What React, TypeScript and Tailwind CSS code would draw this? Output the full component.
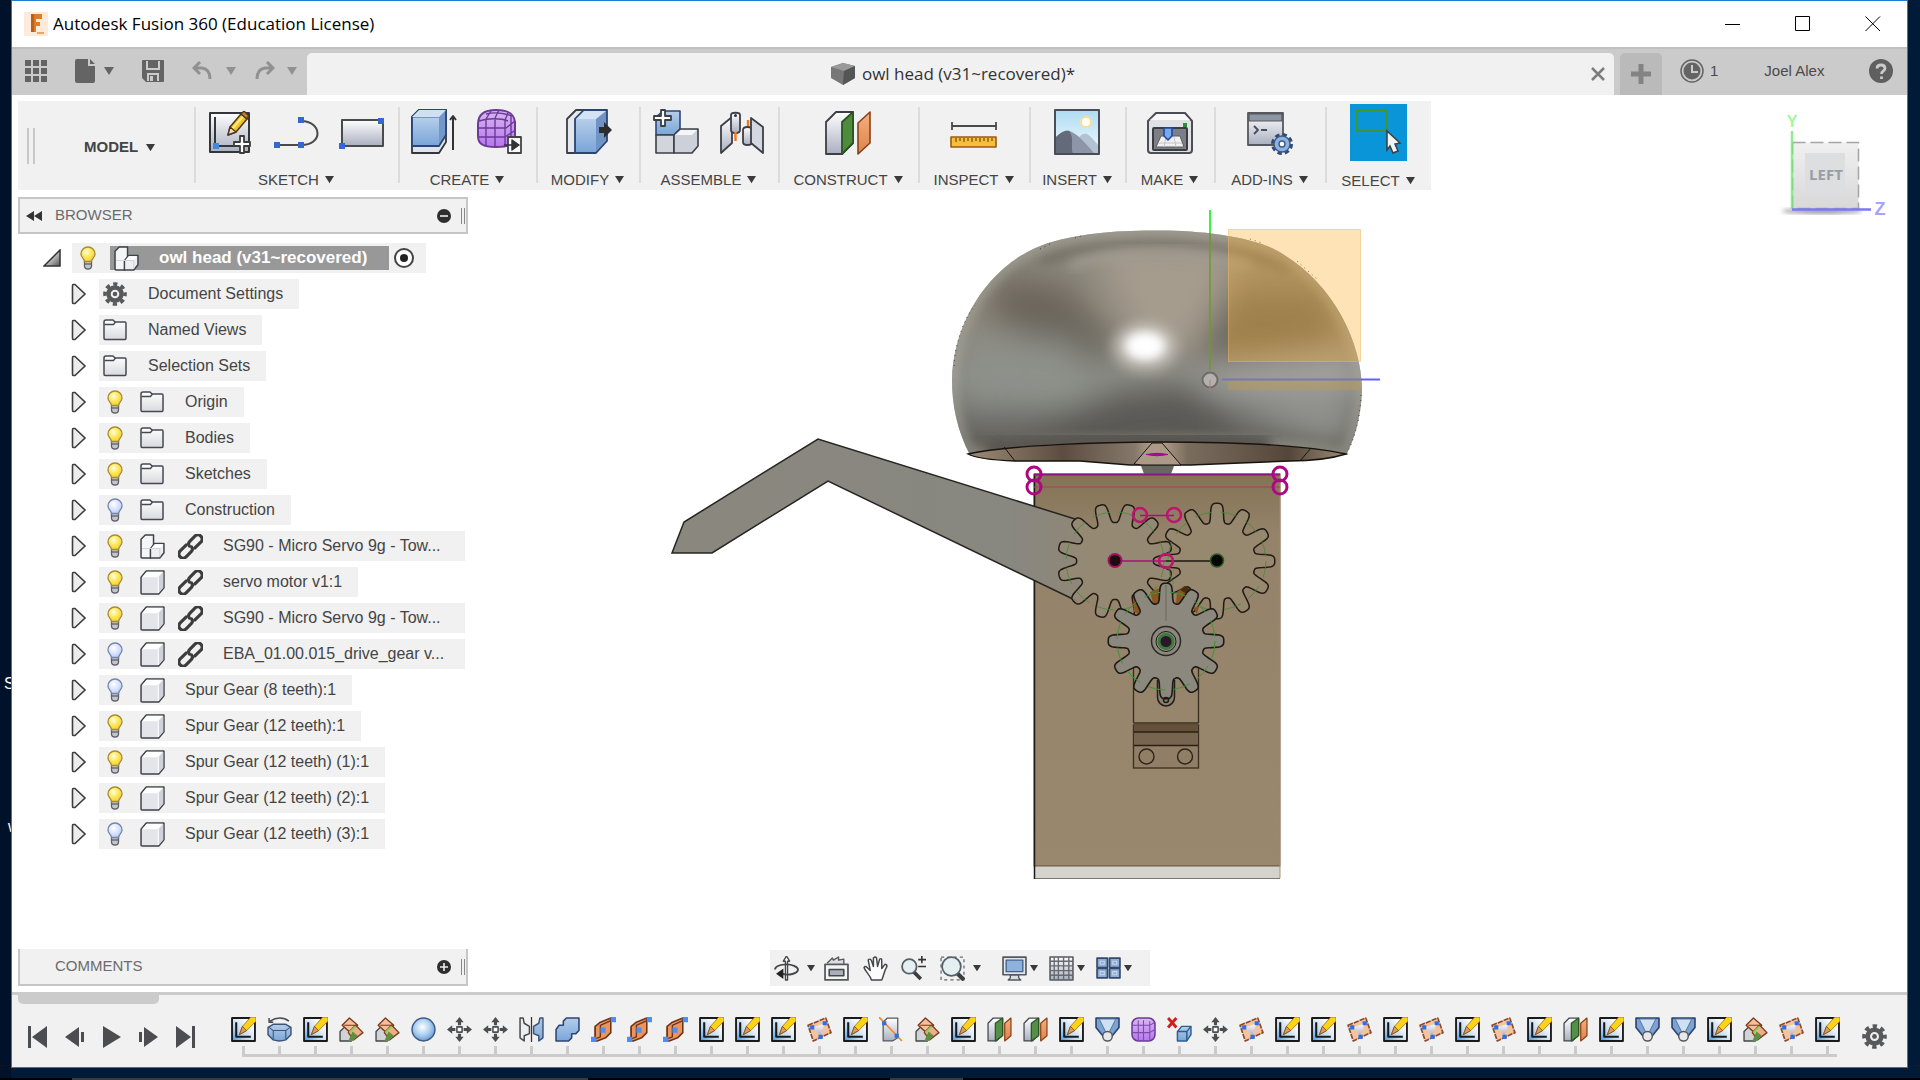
import type { ReactNode } from "react"

const GREY = "#4b4d50"

function gearPath(cx: number, cy: number, phase: number) {
    const points: string[] = []
    for (let i = 0; i < 480; i++) {
        const a = (i / 480) * Math.PI * 2
        const r = 48 + 10 * Math.tanh(2.1 * (Math.cos(12 * (a - phase)) + 0.05))
        points.push(`${(cx + r * Math.cos(a)).toFixed(1)} ${(cy + r * Math.sin(a)).toFixed(1)}`)
    }
    return `M${points.join("L")}Z`
}

/* Gradients shared by all icons */
function SharedDefs() {
    return (
        <svg className="absolute h-0 w-0" aria-hidden="true">
            <defs>
                <linearGradient id="g-steel" x1="0" y1="0" x2="0" y2="1">
                    <stop offset="0" stopColor="#ffffff" />
                    <stop offset="1" stopColor="#a9afc0" />
                </linearGradient>
                <linearGradient id="g-blue" x1="0" y1="0" x2="0" y2="1">
                    <stop offset="0" stopColor="#b5cdea" />
                    <stop offset="1" stopColor="#7ba6d8" />
                </linearGradient>
                <linearGradient id="g-folder" x1="0" y1="0" x2="0" y2="1">
                    <stop offset="0" stopColor="#ffffff" />
                    <stop offset="1" stopColor="#d9dade" />
                </linearGradient>
                <linearGradient id="g-sketch" x1="1" y1="0" x2="0" y2="1">
                    <stop offset="0.3" stopColor="#f4f7fa" />
                    <stop offset="0.65" stopColor="#bcd8f0" />
                    <stop offset="1" stopColor="#3f9cec" />
                </linearGradient>
                <linearGradient id="g-purple" x1="0" y1="0" x2="0" y2="1">
                    <stop offset="0" stopColor="#d9b8f2" />
                    <stop offset="1" stopColor="#b676ee" />
                </linearGradient>
                <linearGradient id="g-sky" x1="0" y1="0" x2="0" y2="1">
                    <stop offset="0" stopColor="#aedcf4" />
                    <stop offset="1" stopColor="#f3fafd" />
                </linearGradient>
                <linearGradient id="g-orange" x1="0" y1="0" x2="0" y2="1">
                    <stop offset="0" stopColor="#f5b080" />
                    <stop offset="1" stopColor="#dd8347" />
                </linearGradient>
                <linearGradient id="g-arrow" x1="0" y1="0" x2="1" y2="1">
                    <stop offset="0.3" stopColor="#eeeeee" />
                    <stop offset="1" stopColor="#555555" />
                </linearGradient>
                <radialGradient id="g-bulb-on" cx="0.4" cy="0.35" r="0.65">
                    <stop offset="0" stopColor="#fffde0" />
                    <stop offset="0.5" stopColor="#fbea62" />
                    <stop offset="1" stopColor="#f2d23c" />
                </radialGradient>
                <radialGradient id="g-bulb-off" cx="0.4" cy="0.35" r="0.65">
                    <stop offset="0" stopColor="#ffffff" />
                    <stop offset="1" stopColor="#bcd0fa" />
                </radialGradient>
                <radialGradient id="g-sphere" cx="0.45" cy="0.4" r="0.6">
                    <stop offset="0" stopColor="#ffffff" />
                    <stop offset="0.6" stopColor="#a9cdf0" />
                    <stop offset="1" stopColor="#6c9bd0" />
                </radialGradient>
            </defs>
        </svg>
    )
}

function Caret({ className = "w-[9px] text-[#3a3a3a]" }: { className?: string }) {
    return (
        <svg viewBox="0 0 10 8" className={`shrink-0 ${className}`} aria-hidden="true">
            <path d="M0 0H10L5 8Z" fill="currentColor" />
        </svg>
    )
}

function BigIcon({ children }: { children: ReactNode }) {
    return (
        <svg viewBox="0 0 48 48" className="h-12 w-12" fill="none" strokeLinejoin="round" aria-hidden="true">
            {children}
        </svg>
    )
}

const bigIcons: Record<string, ReactNode> = {
    sketch: (
        <BigIcon>
            <rect x="4" y="5" width="39" height="39" fill="url(#g-steel)" stroke="#33363b" strokeWidth="2" />
            <path d="M9 9V38H28" stroke="#33363b" strokeWidth="2" />
            <rect x="7" y="35" width="6" height="6" fill="#3f8ae0" />
            <path d="M22 27L24 19L35 6L41 11L30 24Z" fill="#f6c21c" stroke="#4a3a1a" strokeWidth="1.5" />
            <path d="M26 21L37 8.5" stroke="#fdea86" strokeWidth="2" />
            <path d="M35 6L37 4Q38 3 39 4L42 7Q43 8 42 9L41 11Z" fill="#c97a48" stroke="#4a3a1a" strokeWidth="1.5" />
            <path d="M22 27L24 19L30 24Z" fill="#f1dcc0" stroke="#4a3a1a" strokeWidth="1.4" />
            <path d="M34 28H38V34H44V38H38V45H34V38H28V34H34Z" fill="#fff" stroke="#3c3c3c" strokeWidth="1.8" />
        </BigIcon>
    ),
    line: (
        <BigIcon>
            <path d="M5 37H29C52 37 50 13 29 13" stroke="#4a4a4a" strokeWidth="2" />
            <path d="M2 34h6v6h-6zM26 34h6v6h-6zM26 9h6v6h-6z" fill="#3467cf" />
        </BigIcon>
    ),
    rectangle: (
        <BigIcon>
            <rect x="4" y="12" width="41" height="26" fill="url(#g-steel)" stroke="#4a4a4a" strokeWidth="2" />
            <path d="M1 35h6v6h-6zM40 10h6v6h-6z" fill="#3467cf" />
        </BigIcon>
    ),
    extrude: (
        <BigIcon>
            <path d="M2 9L9 2H36V34L29 45H2Z" fill="#dfe3ea" stroke="#33363b" strokeWidth="1.8" />
            <path d="M2 9L9 2H36V27L29 38H2Z" fill="#7298cb" stroke="#2c4674" strokeWidth="1.8" />
            <path d="M2 9L9 2H36L29 9Z" fill="#cfe0f3" />
            <rect x="3" y="10" width="26" height="27" fill="url(#g-blue)" />
            <path d="M43 42V9M40 12L43 8L46 12" stroke="#333" strokeWidth="2" />
        </BigIcon>
    ),
    form: (
        <BigIcon>
            <path d="M2 16C2 5 10 2 20 2C33 2 38 6 39 14V28C38 37 32 39 20 39C7 39 2 36 2 28Z" fill="url(#g-purple)" stroke="#6b3a97" strokeWidth="2" />
            <path d="M3 20H30L39 13M2 29H29L38 23M3 13C12 10 25 10 32 13M10 6C18 4 28 5 36 8M10 11V38M19 10V39M29 12V38M35 8V34M10 11L15 3M19 10L23 2M29 12L32 5" stroke="#6b3a97" strokeWidth="1.4" />
            <rect x="32" y="29" width="13" height="16" fill="#fafafa" stroke="#444" strokeWidth="1.8" />
            <path d="M28 37H36V32L43 37L36 42V37" fill="#333" stroke="#333" strokeWidth="1.5" />
        </BigIcon>
    ),
    pressPull: (
        <BigIcon>
            <path d="M3 11L12 2H21L12 11V45H3Z" fill="#e6e8ec" stroke="#3c3f45" strokeWidth="1.8" />
            <path d="M11 11L20 2H43V33L32 45H11Z" fill="#6e93c4" stroke="#2c4674" strokeWidth="1.8" />
            <path d="M12 11L20 3H42L32 11Z" fill="#d3e3f4" />
            <rect x="12" y="11" width="20" height="33" fill="url(#g-blue)" />
            <path d="M35 19H40V14L48 22L40 30V25H35Z" fill="#2d2d2d" />
        </BigIcon>
    ),
    component: (
        <BigIcon>
            <path d="M4 27V9L11 3H28V21L22 27Z" fill="url(#g-blue)" stroke="#2c4674" strokeWidth="1.6" />
            <path d="M4 27H22V45H4Z" fill="#d2d5dc" stroke="#3c3f45" strokeWidth="1.6" />
            <path d="M22 27L28 21H46V38L40 45H22Z" fill="#ccd0d8" stroke="#3c3f45" strokeWidth="1.6" />
            <path d="M23 27L29 22H45L40 27Z" fill="#f4f5f7" />
            <path d="M9 2H13V8H19V12H13V18H9V12H2V8H9Z" fill="#fff" stroke="#3c3f45" strokeWidth="1.8" />
        </BigIcon>
    ),
    joint: (
        <BigIcon>
            <path d="M3 18L14 9V35L3 45Z" fill="url(#g-steel)" stroke="#3c3f45" strokeWidth="1.8" />
            <path d="M13 7C13 4 22 4 22 7V22C22 26 13 26 13 22Z" fill="url(#g-steel)" stroke="#3c3f45" strokeWidth="1.8" />
            <circle cx="17.5" cy="7.500" r="1.5" fill="#333" />
            <path d="M17.500 24V33M30 12V22" stroke="#ef7a22" strokeWidth="2.4" />
            <path d="M25 22C25 18 34 18 34 22V34C34 38 25 38 25 34Z" fill="url(#g-steel)" stroke="#3c3f45" strokeWidth="1.8" />
            <path d="M33 10L45 19V45L33 35Z" fill="#d3d7df" stroke="#3c3f45" strokeWidth="1.8" />
        </BigIcon>
    ),
    construct: (
        <BigIcon>
            <path d="M2 14L12 4H29V35L18 46H2Z" fill="url(#g-steel)" stroke="#3c3f45" strokeWidth="1.8" />
            <path d="M18 14L29 4V35L18 46Z" fill="#4f8b3c" stroke="#2b5421" strokeWidth="1.8" />
            <path d="M34 15L46 4V35L34 46Z" fill="url(#g-orange)" stroke="#8a4118" strokeWidth="1.6" />
        </BigIcon>
    ),
    measure: (
        <BigIcon>
            <path d="M2 18H46M2 14V22M46 14V22" stroke="#4a4a4a" strokeWidth="1.8" />
            <rect x="1" y="29" width="45" height="10" fill="#f5bf3a" stroke="#9a5a18" strokeWidth="1.6" />
            <path d="M6 30v4M10 30v3M14 30v4M18 30v3M22 30v4M26 30v3M30 30v4M34 30v3M38 30v4M42 30v3" stroke="#8a5a18" strokeWidth="1.4" />
        </BigIcon>
    ),
    insert: (
        <BigIcon>
            <rect x="2" y="2" width="44" height="44" fill="url(#g-sky)" />
            <path d="M22 35C27 26 31 25 34 26C39 29 42 34 46 38V46H22Z" fill="#b3c2d2" />
            <path d="M2 30C8 24 13 22 17 23C28 28 36 40 42 46H2Z" fill="#8d96a8" />
            <path d="M2 30C8 24 12 22 16 23C22 30 17 38 20 46H2Z" fill="#636b7b" />
            <circle cx="33" cy="14" r="5" fill="#fff" stroke="#f9e08c" strokeWidth="2" />
            <rect x="2" y="2" width="44" height="44" stroke="#4a4d55" strokeWidth="2" />
        </BigIcon>
    ),
    make: (
        <BigIcon>
            <path d="M2 13L10 5H39L46 13V42Q46 45 43 45H5Q2 45 2 42Z" fill="#dfe1e4" stroke="#4b4e54" strokeWidth="2" />
            <path d="M4 12L11 6H38L44 12Z" fill="#f8f8f9" />
            <rect x="7" y="20" width="34" height="22" rx="1" fill="#7c8086" stroke="#3b3d42" strokeWidth="2" />
            <path d="M15 28H34L38 39H10Z" fill="#f1f1f1" stroke="#5a5c60" />
            <path d="M12 35H36M20 29L18 39M28 29L30 39" stroke="#c4c4c4" />
            <path d="M18 20H26V28L22 32L18 28Z" fill="#78a8e6" stroke="#1f49a5" strokeWidth="1.6" />
            <rect x="37" y="15" width="4" height="4" fill="#2a8e32" />
        </BigIcon>
    ),
    addins: (
        <BigIcon>
            <rect x="2" y="5" width="35" height="32" fill="url(#g-steel)" stroke="#55585e" strokeWidth="1.8" />
            <rect x="3" y="6" width="33" height="7" fill="#8e95a3" stroke="#55585e" strokeWidth="1.2" />
            <path d="M8 18L12 22L8 26M15 22H21" stroke="#4a4d55" strokeWidth="1.8" />
            <circle cx="36" cy="36" r="9" stroke="#2f4a75" strokeWidth="4" strokeDasharray="4.2 2.9" />
            <circle cx="36" cy="36" r="8" fill="#8fb3df" stroke="#3c5a8a" strokeWidth="1.4" />
            <circle cx="36" cy="36" r="3" fill="#fff" stroke="#3c5a8a" strokeWidth="1.4" />
        </BigIcon>
    ),
}

function SmallIcon({ children, className = "h-[25px] w-[25px]" }: { children: ReactNode; className?: string }) {
    return (
        <svg viewBox="0 0 24 24" className={`shrink-0 ${className}`} fill="none" strokeLinejoin="round" aria-hidden="true">
            {children}
        </svg>
    )
}

function Gear({ className }: { className?: string }) {
    return (
        <SmallIcon className={className}>
            <circle cx="12" cy="12" r="6.500" stroke="#58595b" strokeWidth="4.400" />
            <circle cx="12" cy="12" r="10" stroke="#58595b" strokeWidth="3.600" strokeDasharray="4.200 3.654" strokeDashoffset="2.100" />
            <circle cx="12" cy="12" r="2.300" fill="#58595b" />
        </SmallIcon>
    )
}

const treeIcons: Record<string, ReactNode> = {
    gear: <Gear className="h-6 w-6" />,
    folder: (
        <SmallIcon className="h-6 w-6">
            <path d="M1 4Q1 2 3 2H10L12 4H22Q23 4 23 5.500V20Q23 21.500 22 21.500H2Q1 21.500 1 20Z" fill="url(#g-folder)" stroke="#454851" strokeWidth="1.500" />
            <path d="M1.500 6.500H10.500L12.500 4" stroke="#454851" strokeWidth="1.300" />
        </SmallIcon>
    ),
    body: (
        <SmallIcon>
            <path d="M1 7L6 1H23V17L18 23H2Q1 23 1 22Z" fill="#e4e5ea" stroke="#3e4148" strokeWidth="1.400" />
            <path d="M2 7L6.500 1.700H22L17 7Z" fill="#fff" />
            <path d="M18 7L22.300 2V17L18 22Z" fill="#cfd2d9" />
            <path d="M17.500 7V22" stroke="#fff" />
        </SmallIcon>
    ),
    component: (
        <SmallIcon>
            <path d="M1 5L5 1H13V13L10 23H2Q1 23 1 22Z" fill="#f4f5f7" stroke="#3e4148" strokeWidth="1.400" />
            <path d="M10 14L14 9H23V18L19 23H10Z" fill="#eceef1" stroke="#3e4148" strokeWidth="1.400" />
            <path d="M11 13.500L14 10H22L19 13.500Z" fill="#fff" />
            <path d="M2 14H10M10 14H19V22" stroke="#d0d3d9" />
        </SmallIcon>
    ),
    link: (
        <SmallIcon>
            <g transform="rotate(-45 12 12)" stroke="#3c3c3c" strokeWidth="3" strokeLinecap="round">
                <path d="M10 8H2Q-2 8 -2 12Q-2 16 2 16H9Q12 16 12.500 13" />
                <path d="M14 16H22Q26 16 26 12Q26 8 22 8H15Q12 8 11.500 11" />
            </g>
        </SmallIcon>
    ),
}

function Bulb({ on }: { on: boolean }) {
    return (
        <svg viewBox="0 0 18 24" className="h-6 w-[18px] shrink-0" fill="none" aria-hidden="true">
            <path d="M5.500 15H12.500V20Q12.500 23 9 23Q5.500 23 5.500 20Z" fill="#c4c6cc" stroke="#5d606b" strokeWidth="1.300" />
            <path d="M5.500 18H12.500" stroke="#5d606b" strokeWidth="1.300" />
            <path d="M9 1A7 7 0 0 1 16 8C16 11.500 12.500 12.500 12.500 15.500H5.500C5.500 12.500 2 11.500 2 8A7 7 0 0 1 9 1Z" fill={on ? "url(#g-bulb-on)" : "url(#g-bulb-off)"} stroke={on ? "#a98a35" : "#7685ad"} strokeWidth="1.300" />
        </svg>
    )
}

const timelineIcons: Record<string, ReactNode> = {
    sketch: (
        <SmallIcon>
            <rect x="1" y="1" width="22" height="22" fill="url(#g-sketch)" stroke="#1a1a1a" strokeWidth="1.800" />
            <path d="M5 5V19H19" stroke="#1a1a1a" strokeWidth="2" />
            <path d="M8 17L11 9L19 0H24V4L15 13Z" fill="#fbd416" stroke="#a66a12" strokeWidth="0.800" />
            <path d="M8 17L11 9L15 13Z" fill="#e29a58" stroke="#7a4a1a" strokeWidth="0.800" />
        </SmallIcon>
    ),
    revolve: (
        <SmallIcon>
            <path d="M3 4C9 0 16 0 21 4M2 1V5H6" stroke="#4a4a4a" strokeWidth="1.400" />
            <path d="M1 10L6 7H18L23 10V17L18 22Q12 24 6 22L1 17Z" fill="url(#g-blue)" stroke="#3c5377" strokeWidth="1.400" />
            <path d="M2 10L6 13H18L22 10M6 13V21M18 13V21" stroke="#3c5377" />
        </SmallIcon>
    ),
    split: (
        <SmallIcon>
            <path d="M1 23V14L6 9L12 14V23Z" fill="#d1d3d6" stroke="#44464a" strokeWidth="1.300" />
            <path d="M10 1L18 8L11 15L3 8Z" fill="#f6bf9b" stroke="#7b3c1c" strokeWidth="1.300" />
            <path d="M16 8L23 15L14 22L9 15Z" fill="#eeae86" stroke="#7b3c1c" strokeWidth="1.300" />
            <path d="M13 14L9 23H13L18 18Z" fill="#5d8f42" />
            <path d="M5 8H16M9 15L17 7" stroke="#7b3c1c" strokeWidth="1" />
            <path d="M10 15L16 9" stroke="#8fd35c" strokeWidth="2" />
        </SmallIcon>
    ),
    sphere: (
        <SmallIcon>
            <circle cx="12" cy="12" r="11" fill="url(#g-sphere)" stroke="#3e5a85" strokeWidth="1.400" />
        </SmallIcon>
    ),
    move: (
        <SmallIcon>
            <rect x="9.500" y="9.500" width="5" height="5" fill="#fff" stroke={GREY} strokeWidth="1.500" />
            <path d="M12 0L16 5H13.500V8H10.500V5H8ZM12 24L8 19H10.500V16H13.500V19H16ZM0 12L5 8V10.500H8V13.500H5V16ZM24 12L19 16V13.500H16V10.500H19V8Z" fill={GREY} />
        </SmallIcon>
    ),
    mirror: (
        <SmallIcon>
            <path d="M1 1L4 1L5 6L10 9V16L5 18V23L1 20Z" fill="#eceef1" stroke="#44464a" strokeWidth="1.400" />
            <path d="M23 1L20 1L19 6L14 9V16L19 18V23L23 20Z" fill="url(#g-blue)" stroke="#3c5377" strokeWidth="1.400" />
            <path d="M12 0V24" stroke="#333" strokeWidth="1.200" />
        </SmallIcon>
    ),
    combine: (
        <SmallIcon>
            <path d="M1 12L4 8H8V4L11 1H23V13L20 16H16V20L13 23H1Z" fill="url(#g-blue)" stroke="#2c4674" strokeWidth="1.500" />
        </SmallIcon>
    ),
    plane: (
        <SmallIcon>
            <path d="M4 9L9 5L19 1V15L14 20L6 23H4Z" fill="#e9955c" stroke="#70351a" strokeWidth="1.500" />
            <path d="M4 9V21L9 19V8L20 3" stroke="#70351a" strokeWidth="1.300" />
            <path d="M0 19h5v5h-5zM19 0h5v5h-5zM9 10h5v5h-5z" fill="#4f8ff5" />
        </SmallIcon>
    ),
    patch: (
        <SmallIcon>
            <path d="M1 8L18 1L23 15L6 23Z" fill="#f6c3a0" stroke="#8b4a2b" strokeWidth="1.600" strokeDasharray="5 1" />
            <path d="M6 10L17 6L13 18Z" fill="url(#g-steel)" />
            <path d="M3 8h4v4h-4zM15 4h4v4h-4zM11 17h4v4h-4z" fill="#2f6fe0" />
        </SmallIcon>
    ),
    axis: (
        <SmallIcon>
            <path d="M4 5L8 1H18V20L13 23H4Z" fill="url(#g-steel)" stroke="#55585e" strokeWidth="1.200" />
            <path d="M0 0L22 23" stroke="#f28a2e" strokeWidth="1.600" />
            <path d="M3 4h4v4h-4zM15 16h4v4h-4z" fill="#2f6fe0" />
        </SmallIcon>
    ),
    offset: (
        <SmallIcon>
            <path d="M1 6L6 1H15V17L9 23H1Z" fill="url(#g-steel)" stroke="#44464a" strokeWidth="1.200" />
            <path d="M8 6L15 1V18L8 23Z" fill="#548f4a" stroke="#2b5421" strokeWidth="1.200" />
            <path d="M17 6L23 1V18L17 23Z" fill="url(#g-orange)" stroke="#8a4118" strokeWidth="1.200" />
        </SmallIcon>
    ),
    loft: (
        <SmallIcon>
            <path d="M1 1H23V10L15 20H9L1 10Z" fill="#7fa3d0" stroke="#2c4674" strokeWidth="1.600" />
            <path d="M4 2H20L14 14H10Z" fill="#cfe0f3" stroke="#5f7fa8" />
            <circle cx="12" cy="18.500" r="4.600" fill="#e6e8eb" stroke="#55585e" strokeWidth="1.400" />
        </SmallIcon>
    ),
    form: (
        <SmallIcon>
            <rect x="1" y="1" width="22" height="22" rx="6" fill="url(#g-purple)" stroke="#6b3a97" strokeWidth="1.500" />
            <path d="M1 8H18L23 5M1 15H18L23 12M7 3V22M12 3V22M18 4V22" stroke="#7e4bab" />
        </SmallIcon>
    ),
    remove: (
        <SmallIcon>
            <path d="M1 1L9 10M9 1L1 10" stroke="#cf1f1f" strokeWidth="2.800" />
            <path d="M10 14L14 9H23V17L19 23H10Z" fill="url(#g-blue)" stroke="#2c5f8f" strokeWidth="1.400" />
            <path d="M10 14H19V23M19 14L23 9" stroke="#2c5f8f" strokeWidth="1.400" />
        </SmallIcon>
    ),
}

const timeline =
    "sketch revolve sketch split split sphere move move mirror combine plane plane plane sketch sketch sketch patch sketch axis split sketch offset offset sketch loft form remove move patch sketch sketch patch sketch patch sketch patch sketch offset sketch loft loft sketch split patch sketch".split(" ")

const toolGroups = [
    { label: "SKETCH", icons: ["sketch", "line", "rectangle"], width: "w-[204px]" },
    { label: "CREATE", icons: ["extrude", "form"], width: "w-[138px]" },
    { label: "MODIFY", icons: ["pressPull"], width: "w-[103px]" },
    { label: "ASSEMBLE", icons: ["component", "joint"], width: "w-[139px]" },
    { label: "CONSTRUCT", icons: ["construct"], width: "w-[140px]" },
    { label: "INSPECT", icons: ["measure"], width: "w-[111px]" },
    { label: "INSERT", icons: ["insert"], width: "w-[96px]" },
    { label: "MAKE", icons: ["make"], width: "w-[89px]" },
    { label: "ADD-INS", icons: ["addins"], width: "w-[111px]" },
]

type TreeItem = { label: string; icons: string[]; bulb?: "on" | "off"; full?: boolean }

const tree: TreeItem[] = [
    { label: "Document Settings", icons: ["gear"] },
    { label: "Named Views", icons: ["folder"] },
    { label: "Selection Sets", icons: ["folder"] },
    { label: "Origin", icons: ["folder"], bulb: "on" },
    { label: "Bodies", icons: ["folder"], bulb: "on" },
    { label: "Sketches", icons: ["folder"], bulb: "on" },
    { label: "Construction", icons: ["folder"], bulb: "off" },
    { label: "SG90 - Micro Servo 9g - Tow...", icons: ["component", "link"], bulb: "on", full: true },
    { label: "servo motor v1:1", icons: ["body", "link"], bulb: "on" },
    { label: "SG90 - Micro Servo 9g - Tow...", icons: ["body", "link"], bulb: "on", full: true },
    { label: "EBA_01.00.015_drive_gear v...", icons: ["body", "link"], bulb: "off", full: true },
    { label: "Spur Gear (8 teeth):1", icons: ["body"], bulb: "off" },
    { label: "Spur Gear (12 teeth):1", icons: ["body"], bulb: "on" },
    { label: "Spur Gear (12 teeth) (1):1", icons: ["body"], bulb: "on" },
    { label: "Spur Gear (12 teeth) (2):1", icons: ["body"], bulb: "on" },
    { label: "Spur Gear (12 teeth) (3):1", icons: ["body"], bulb: "off" },
]

function TitleBar() {
    return (
        <header className="flex h-[46px] shrink-0 items-center bg-white pl-3">
            <svg viewBox="0 0 24 24" className="h-6 w-6" aria-hidden="true">
                <rect width="24" height="24" fill="#fdeadb" />
                <path d="M7 2H18V7H12V10H16V14H12V20H7Z" fill="#dd7a2b" />
                <path d="M7 2H10V20H7Z" fill="#b8611f" />
                <path d="M13 20H20V22H13Z" fill="#f0a464" />
            </svg>
            <h1 className="ml-[5px] font-['Open_Sans',sans-serif] text-[17px] text-black">
                Autodesk Fusion 360 (Education License)
            </h1>
            <div className="ml-auto flex items-center gap-[54px] pr-[26px]">
                <button type="button" aria-label="Minimize">
                    <svg viewBox="0 0 16 16" className="h-4 w-4"><path d="M0 8.500H15" stroke="#000" /></svg>
                </button>
                <button type="button" aria-label="Maximize">
                    <svg viewBox="0 0 16 16" className="h-4 w-4"><path d="M.5.5H14.500V14.500H.5Z" stroke="#000" fill="none" /></svg>
                </button>
                <button type="button" aria-label="Close">
                    <svg viewBox="0 0 16 16" className="h-4 w-4"><path d="M.5.5L15 15M15 .5L.5 15" stroke="#000" /></svg>
                </button>
            </div>
        </header>
    )
}

function TabBar() {
    return (
        <nav className="flex h-12 shrink-0 border-t-2 border-[#c0c0c0] bg-[#cbcbcb] pt-1">
            <div className="flex w-[295px] shrink-0 items-center pb-[6px] pl-[13px] text-[#646464]">
                <button type="button" aria-label="Data panel">
                    <svg viewBox="0 0 22 22" className="h-[22px] w-[22px]" fill="currentColor">
                        <path d="M0 0h6v6H0zM8 0h6v6H8zM16 0h6v6h-6zM0 8h6v6H0zM8 8h6v6H8zM16 8h6v6h-6zM0 16h6v6H0zM8 16h6v6H8zM16 16h6v6h-6z" />
                    </svg>
                </button>
                <button type="button" aria-label="File" className="ml-7 flex items-center gap-[9px]">
                    <svg viewBox="0 0 20 24" className="h-6 w-5" fill="currentColor">
                        <path d="M0 2Q0 0 2 0H13V7H20V22Q20 24 18 24H2Q0 24 0 22ZM15 0L20 5H15Z" />
                    </svg>
                    <Caret className="w-[10px]" />
                </button>
                <button type="button" aria-label="Save" className="ml-7">
                    <svg viewBox="0 0 22 22" className="h-[22px] w-[22px]">
                        <path d="M1 0H21Q22 0 22 1V21Q22 22 21 22H4L0 18V1Q0 0 1 0Z" fill="currentColor" />
                        <path d="M5 1V9H17V1M6 21V14H16V21" stroke="#cbcbcb" strokeWidth="2" fill="none" />
                        <path d="M8 16h3v5H8z" fill="#cbcbcb" />
                    </svg>
                </button>
                <button type="button" aria-label="Undo" className="ml-7 flex items-center gap-[14px] text-[#919191]">
                    <svg viewBox="0 0 20 20" className="h-5 w-5" fill="none" stroke="currentColor" strokeWidth="3">
                        <path d="M8 1L2 7L8 13M2 7H10Q18 8 18 18" />
                    </svg>
                    <Caret className="w-[10px]" />
                </button>
                <button type="button" aria-label="Redo" className="ml-[19px] flex items-center gap-3 text-[#919191]">
                    <svg viewBox="0 0 20 20" className="h-5 w-5" fill="none" stroke="currentColor" strokeWidth="3">
                        <path d="M12 1L18 7L12 13M18 7H10Q2 8 2 18" />
                    </svg>
                    <Caret className="w-[10px]" />
                </button>
            </div>
            <div className="flex flex-1 items-center rounded-t-[5px] bg-[#f1f1f1] pr-[9px]">
                <div className="flex flex-1 items-center justify-center gap-[7px] pl-2">
                    <svg viewBox="0 0 24 22" className="h-[22px] w-6" aria-hidden="true">
                        <path d="M0 4L12 0L24 3V15L12 22L0 15Z" fill="#777" />
                        <path d="M0 4L12 0L24 3L13 8Z" fill="#9a9a9a" />
                        <path d="M13 8L24 3V15L12 22Z" fill="#555" />
                    </svg>
                    <span className="font-['Open_Sans',sans-serif] text-[17px] text-[#333]">owl head (v31~recovered)*</span>
                </div>
                <button type="button" aria-label="Close tab">
                    <svg viewBox="0 0 14 14" className="h-[14px] w-[14px]"><path d="M1 1L13 13M13 1L1 13" stroke="#7d7d7d" strokeWidth="2.500" /></svg>
                </button>
            </div>
            <button type="button" aria-label="New tab" className="mx-[6px] flex w-[42px] items-center justify-center rounded-t-[5px] bg-[#bababa]">
                <svg viewBox="0 0 20 20" className="h-5 w-5"><path d="M10 0V20M0 10H20" stroke="#838383" strokeWidth="5" /></svg>
            </button>
            <div className="flex w-[239px] shrink-0 items-center pb-[6px] pl-3 text-[15px] text-[#4a4a4a]">
                <button type="button" className="flex items-center gap-[6px]">
                    <svg viewBox="0 0 24 24" className="h-6 w-6" fill="none" aria-hidden="true">
                        <circle cx="12" cy="12" r="11" stroke="#646464" strokeWidth="1.500" />
                        <circle cx="12" cy="12" r="8.500" fill="#646464" />
                        <path d="M12 6V13H18" stroke="#cbcbcb" strokeWidth="2" />
                    </svg>
                    1
                </button>
                <button type="button" className="ml-[46px]">Joel Alex</button>
                <button type="button" aria-label="Help" className="mr-[14px] ml-auto">
                    <svg viewBox="0 0 24 24" className="h-6 w-6" fill="none">
                        <circle cx="12" cy="12" r="12" fill="#5f5f5f" />
                        <path d="M8 9.500Q8 6 12 6Q16 6 16 9.500C16 12 12.500 12 12.500 15M12.500 17.500V20" stroke="#cbcbcb" strokeWidth="2.800" />
                    </svg>
                </button>
            </div>
        </nav>
    )
}

function Toolbar() {
    return (
        <div className="flex h-[89px] w-fit shrink-0 bg-[#f1f1f1] text-[15px] text-[#444]">
            <div className="flex w-[176px] items-center">
                <span className="ml-[9px] h-9 w-2 border-x-2 border-[#c8c8c8]" />
                <button type="button" aria-haspopup="menu" className="ml-[49px] flex items-center gap-2 pt-1 font-bold">
                    MODEL <Caret />
                </button>
            </div>
            {toolGroups.map((group) => (
                <div key={group.label} className={`relative flex shrink-0 flex-col items-center pt-[7px] ${group.width}`}>
                    <span className="absolute top-[6px] left-0 h-[76px] w-[2px] bg-[#dcdcdc]" />
                    <div className="flex h-14 gap-[18px]">
                        {group.icons.map((name) => (
                            <button type="button" key={name} aria-label={name} className="h-12">
                                {bigIcons[name]}
                            </button>
                        ))}
                    </div>
                    <button type="button" aria-haspopup="menu" className="mt-[7px] flex items-center gap-[6px] leading-5">
                        {group.label} <Caret />
                    </button>
                </div>
            ))}
            <div className="relative flex w-[106px] shrink-0 flex-col items-center pt-[3px]">
                <span className="absolute top-[6px] left-0 h-[76px] w-[2px] bg-[#dcdcdc]" />
                <button type="button" aria-label="Window selection" className="h-[57px] w-[57px] bg-[#0a95d9]">
                    <svg viewBox="0 0 57 57" className="h-full w-full" fill="none">
                        <rect x="7" y="6" width="30" height="21" stroke="#3f962d" strokeWidth="2" />
                        <path d="M37 27L50 39L45 40L48 47L43 49L40 42L37 46Z" fill="#f3f3f3" stroke="#3d3d3d" strokeWidth="1.500" />
                    </svg>
                </button>
                <button type="button" aria-haspopup="menu" className="mt-[10px] flex items-center gap-[6px] leading-5">
                    SELECT <Caret />
                </button>
            </div>
        </div>
    )
}

function PanelBar({ title, open }: { title: string; open: boolean }) {
    return (
        <div className={`flex h-[37px] shrink-0 items-center border-2 border-[#c6c6c6] bg-[#f1f1f1] pr-[1px] text-[15px] text-[#6b6b6b] ${open ? "" : "border-t-0"}`}>
            <span className="flex w-[35px] pl-[6px]">
                {open && (
                    <svg viewBox="0 0 16 10" className="h-[10px] w-4" fill="#333" aria-hidden="true"><path d="M8 0V10L0 5ZM16 0V10L8 5Z" /></svg>
                )}
            </span>
            <h2>{title}</h2>
            <button type="button" aria-label={open ? `Collapse ${title}` : `Expand ${title}`} className="ml-auto">
                <svg viewBox="0 0 14 14" className="h-[14px] w-[14px]">
                    <circle cx="7" cy="7" r="7" fill="#2e2e2e" />
                    <path d={open ? "M3 7H11" : "M3 7H11M7 3V11"} stroke="#eee" strokeWidth="1.600" />
                </svg>
            </button>
            <span className="ml-[10px] h-4 w-1 border-x border-[#888]" />
        </div>
    )
}

function BrowserTree() {
    return (
        <div className="mt-[9px] text-[16px] text-[#444]">
            <div className="flex h-[30px] items-center">
                <svg viewBox="0 0 18 18" className="ml-[25px] h-[18px] w-[18px]" aria-hidden="true">
                    <path d="M1 17H17V1Z" fill="url(#g-arrow)" stroke="#333" strokeWidth="1.500" />
                </svg>
                <div className="ml-[11px] flex h-[30px] items-center bg-[#f1f1f1] pr-3 pl-[7px]">
                    <Bulb on />
                    <div className="ml-[13px] flex h-6 w-[279px] items-center bg-[#989898] pl-1 text-[17px] font-bold text-white">
                        {treeIcons.component}
                        <span className="ml-5">owl head (v31~recovered)</span>
                    </div>
                    <label className="ml-[5px] flex">
                        <input type="radio" name="active-component" aria-label="Activate component" defaultChecked className="flex h-5 w-5 appearance-none items-center justify-center rounded-full border-2 border-[#444] bg-white before:h-2 before:w-2 before:rounded-full before:bg-[#222]" />
                    </label>
                </div>
            </div>
            <ul>
                {tree.map((item, i) => (
                    <li key={i} className="mt-[6px] flex h-[30px] items-center pl-[53px]">
                        <button type="button" aria-label={`Expand ${item.label}`} className="w-7">
                            <svg viewBox="0 0 16 22" className="h-[22px] w-4">
                                <path d="M2 1.500H4L14 11L4 20.500H2Q1.500 20.500 1.500 19V3Q1.500 1.500 2 1.500Z" fill="#ececec" stroke="#3d3d3d" strokeWidth="1.600" />
                            </svg>
                        </button>
                        <div className={`flex h-[30px] items-center bg-[#f1f1f1] pr-4 pl-1 ${item.full ? "w-[366px]" : ""}`}>
                            {item.bulb && (
                                <span className="flex w-[37px] pl-[3px]">
                                    <Bulb on={item.bulb === "on"} />
                                </span>
                            )}
                            {item.icons.map((name) => (
                                <span key={name} className="flex w-[38px]">{treeIcons[name]}</span>
                            ))}
                            <span className="pl-[7px] whitespace-nowrap">{item.label}</span>
                        </div>
                    </li>
                ))}
            </ul>
        </div>
    )
}

/* Side view of the model: head dome, arm, gear train and servo housing */
function Model() {
    const dome =
        "M970 455C957 430 952 405 952 380C953 322 990 262 1048 243C1085 232 1120 230.500 1160 230.500C1200 230.500 1245 236 1272 248C1330 277 1362 340 1362 390C1361 418 1354 440 1346 455C1300 446 1240 442 1160 442C1080 442 1000 446 970 455Z"
    return (
        <svg viewBox="468 197 984 753" className="min-h-0 w-full flex-1" fill="none" role="img" aria-label="owl head model">
            <defs>
                <clipPath id="dome-clip"><path d={dome} /></clipPath>
                <filter id="soft" x="-50%" y="-50%" width="200%" height="200%"><feGaussianBlur stdDeviation="16" /></filter>
                <filter id="softer" x="-50%" y="-50%" width="200%" height="200%"><feGaussianBlur stdDeviation="6" /></filter>
                <linearGradient id="dome-base" x1="0" y1="0" x2="0" y2="1">
                    <stop offset="0" stopColor="#88857c" />
                    <stop offset="0.350" stopColor="#8f897e" />
                    <stop offset="0.650" stopColor="#888983" />
                    <stop offset="0.850" stopColor="#6e6e69" />
                    <stop offset="1" stopColor="#5a5852" />
                </linearGradient>
                <linearGradient id="box-fill" x1="0" y1="0" x2="0" y2="1">
                    <stop offset="0" stopColor="#857355" />
                    <stop offset="0.150" stopColor="#94826a" />
                    <stop offset="1" stopColor="#99876e" />
                </linearGradient>
                <linearGradient id="under-left" x1="0" y1="0" x2="1" y2="0">
                    <stop offset="0" stopColor="#9c8b76" />
                    <stop offset="0.250" stopColor="#5c4d40" />
                    <stop offset="0.440" stopColor="#85786a" />
                    <stop offset="0.500" stopColor="#bda894" />
                    <stop offset="0.580" stopColor="#7b6d5e" />
                    <stop offset="0.850" stopColor="#54473a" />
                    <stop offset="1" stopColor="#9c8b76" />
                </linearGradient>
                <linearGradient id="arm-fill" x1="0" y1="0" x2="1" y2="0">
                    <stop offset="0" stopColor="#8a877e" />
                    <stop offset="0.800" stopColor="#888780" />
                    <stop offset="1" stopColor="#918775" />
                </linearGradient>
            </defs>

            <path d={dome} fill="url(#dome-base)" />
            <g clipPath="url(#dome-clip)">
                <g filter="url(#soft)">
                    <path d="M1090 245L1240 245L1195 350L1140 340Z" fill="#a69c8e" />
                    <path d="M1000 275L1065 285L1120 345L1090 365L985 315Z" fill="#6a655c" />
                    <path d="M1235 290L1325 290L1340 345L1190 365L1205 335Z" fill="#6c675d" />
                    <path d="M965 345L1065 340L1110 385L1060 405L960 400Z" fill="#8e918a" />
                    <path d="M1190 372L1350 355L1360 385L1220 390Z" fill="#a8a8a5" />
                    <path d="M1020 435L1110 400L1190 390L1250 440L1100 460Z" fill="#5a5852" />
                    <path d="M1230 398L1350 390L1350 445L1290 430Z" fill="#92938d" />
                </g>
                <path d="M1040 262C1100 236 1220 236 1290 270" stroke="#6f6b61" strokeWidth="8" filter="url(#softer)" />
                <path d="M1070 266C1120 247 1200 247 1250 266" stroke="#a5a198" strokeWidth="7" filter="url(#softer)" />
                <path d={dome} stroke="#b5b3a8" strokeWidth="8" filter="url(#softer)" opacity="0.7" />
                <path d="M985 448C1080 438 1200 438 1270 444" stroke="#4d4a45" strokeWidth="12" filter="url(#softer)" />
                <ellipse cx="1145" cy="347" rx="34" ry="26" fill="#cbc6be" filter="url(#softer)" opacity="0.6" />
                <ellipse cx="1145" cy="346" rx="21" ry="14" fill="#ffffff" filter="url(#softer)" />
                <ellipse cx="1145" cy="346" rx="14" ry="9" fill="#ffffff" filter="url(#softer)" />
            </g>
            <path d="M954 366C955 345 963 320 975 305M1040 249L1050 244M1075 238L1084 235M1250 239L1262 243M1297 261L1318 280M1361 395C1360 420 1354 440 1347 453" stroke="#44423d" strokeDasharray="1 4" />

            <path d="M968 454C1010 445 1100 442 1160 442C1240 442 1310 446 1346 454C1330 459 1310 461 1290 461L1190 465H1130L1080 461H1015C990 460 975 458 968 454Z" fill="url(#under-left)" stroke="#17130f" strokeWidth="1.400" />
            <path d="M1152 443L1134 464L1142 465H1181L1162 443Z" fill="#ad9a86" stroke="#17130f" />
            <path d="M1004 447L1015 461M1311 448L1300 461" stroke="#17130f" />
            <path d="M1146 454.500Q1157 452 1168 454.500Q1157 457 1146 454.500Z" fill="#98108a" stroke="#98108a" />
            <path d="M1141 466H1174L1171 474H1144Z" fill="#686863" />

            <rect x="1034" y="474" width="246" height="392" fill="url(#box-fill)" stroke="#80694e" />
            <rect x="1034" y="866" width="246" height="12" fill="#d4d4cc" />
            <path d="M1034 866H1280" stroke="#6b5a45" />
            <path d="M1034 878.500H1280" stroke="#77776f" />
            <path d="M1034.500 474V879" stroke="#1d1a15" strokeWidth="1.500" />
            <path d="M1280 474V878" stroke="#a8937b" />

            <path d="M672 553L684 522L818 439L1075 519L1095 561L1077 601L828 481L712 553Z" fill="url(#arm-fill)" />
            <path d="M1075 519L818 439L684 522L672 553H712L828 481L1077 601" stroke="#262521" strokeWidth="1.500" />

            <path d={gearPath(1115, 561, Math.PI / 12)} fill="#958976" fillOpacity="0.9" stroke="#211b14" strokeWidth="1.500" />
            <path d={gearPath(1217, 561, 0)} fill="#988971" fillOpacity="0.85" stroke="#211b14" strokeWidth="1.500" />
            <path d="M1133 596L1141 598L1139 614L1134 612ZM1150 592L1160 588L1158 603L1153 603ZM1177 592L1184 586L1192 591L1184 604L1176 604ZM1193 608L1199 606L1197 614Z" fill="#8b5420" />
            <path d="M1180 590L1185 586L1192 591L1187 594Z" fill="#4a2c10" />
            <circle cx="1115" cy="561" r="49" stroke="#3e8b37" strokeDasharray="17 9" opacity="0.75" />
            <circle cx="1217" cy="561" r="49" stroke="#3e8b37" strokeDasharray="17 9" opacity="0.75" />

            <path d="M1133.500 665V723M1198.500 665V723M1133.500 723H1198.500" stroke="#3b2e20" strokeWidth="1.300" />
            <rect x="1133.500" y="725" width="65" height="43" fill="#917e66" stroke="#3b2e20" strokeWidth="1.300" />
            <rect x="1134" y="725" width="64" height="7" fill="#65503a" />
            <rect x="1134" y="732" width="64" height="13" fill="#776550" />
            <path d="M1134 732H1198M1134 745.500H1198" stroke="#2d2013" strokeWidth="1.500" />
            <circle cx="1146.500" cy="756.500" r="7.500" stroke="#2b241b" strokeWidth="1.400" />
            <circle cx="1185" cy="756.500" r="7.500" stroke="#2b241b" strokeWidth="1.400" />
            <path d="M1157.500 680V697A8.500 9 0 0 0 1174.500 697V680" fill="#8b8271" stroke="#241d16" strokeWidth="1.500" />
            <path d={gearPath(1166, 641, 0)} fill="#8c887e" stroke="#1e1b16" strokeWidth="1.600" />
            <circle cx="1166" cy="641" r="49" stroke="#3e9437" strokeDasharray="17 9" />
            <circle cx="1166" cy="641" r="14.500" stroke="#2a2824" strokeWidth="1.500" />
            <circle cx="1166" cy="641.500" r="7" fill="#2b1727" stroke="#3a7a3b" strokeWidth="3" />
            <circle cx="1166" cy="641.500" r="10" stroke="#1c1c18" />
            <circle cx="1166" cy="700" r="2.500" stroke="#1e1b16" strokeWidth="1.500" />
            <path d="M1166 585V621" stroke="#6b665b" />

            <path d="M1166 561H1217" stroke="#1d1611" strokeWidth="1.500" />
            <path d="M1115 561H1166M1140 515.500H1174" stroke="#a80f7d" strokeWidth="1.500" />
            <circle cx="1115" cy="560.500" r="6.500" fill="#1d0b10" stroke="#a3125f" strokeWidth="2" />
            <circle cx="1217" cy="560.500" r="6.500" fill="#050505" stroke="#2b5f1d" strokeWidth="1.500" />
            <g stroke="#c0136f" strokeWidth="2.500">
                <circle cx="1140" cy="515" r="7" />
                <circle cx="1174" cy="515" r="7" />
                <circle cx="1166" cy="561" r="7" />
            </g>
            <path d="M1034 474.500H1280" stroke="#8d1683" strokeWidth="2" />
            <path d="M1034 487H1280" stroke="#a93b71" />
            <g stroke="#ae0782" strokeWidth="3">
                <circle cx="1034" cy="474" r="7" />
                <circle cx="1034" cy="487" r="7" />
                <circle cx="1280" cy="474" r="7" />
                <circle cx="1280" cy="487" r="7" />
            </g>

            {/* origin planes and axes */}
            <rect x="1228.500" y="229.500" width="132" height="132" fill="#fbb02e" fillOpacity="0.350" stroke="#f2b860" strokeOpacity="0.5" />
            <rect x="1228" y="381" width="133" height="9" fill="#c79a45" fillOpacity="0.350" />
            <path d="M1210 210V233" stroke="#3cf23c" strokeWidth="2" />
            <path d="M1210 233V370" stroke="#6a9b2c" strokeWidth="1.500" />
            <path d="M1222 379.500H1361" stroke="#7b78ae" strokeWidth="2" />
            <path d="M1361 379.500H1380" stroke="#665cff" strokeWidth="2" />
            <circle cx="1210" cy="380" r="7.500" fill="#b3b1ad" stroke="#6d6c68" strokeWidth="2" />
            <path d="M1210 380V391" stroke="#c07a76" />
        </svg>
    )
}

function ViewCube() {
    return (
        <svg viewBox="1770 108 125 110" className="absolute top-[13px] right-3 h-[110px] w-[125px]" fill="none" role="img" aria-label="View cube">
            <defs>
                <linearGradient id="cube-face" x1="0" y1="0" x2="0" y2="1">
                    <stop offset="0" stopColor="#f0f0f0" />
                    <stop offset="1" stopColor="#d8d8d8" />
                </linearGradient>
                <filter id="cube-shadow"><feGaussianBlur stdDeviation="2" /></filter>
            </defs>
            <ellipse cx="1822" cy="211" rx="40" ry="3" fill="#9c9c9c" filter="url(#cube-shadow)" />
            <rect x="1792.500" y="142.500" width="66" height="66" fill="url(#cube-face)" stroke="#a5a5a5" strokeWidth="1.500" strokeDasharray="13 5" />
            <rect x="1805" y="153" width="40" height="42" fill="#dcdee0" />
            <path d="M1792 131V209" stroke="#7be67b" strokeWidth="2.500" opacity="0.8" />
            <path d="M1792 209.500H1871" stroke="#7d78f2" strokeWidth="2.500" />
            <text x="1826" y="180" textAnchor="middle" fontSize="15" fontWeight="bold" fill="#9a9da3" fontFamily="Open Sans, sans-serif">LEFT</text>
            <text x="1792" y="127" textAnchor="middle" fontSize="16" fontWeight="bold" fill="#a0f7a0" fontFamily="Liberation Sans, sans-serif">Y</text>
            <text x="1880" y="215" textAnchor="middle" fontSize="18" fontWeight="bold" fill="#a5a2fa" fontFamily="Liberation Sans, sans-serif">Z</text>
        </svg>
    )
}

const navIcons: { name: string; caret?: boolean; className: string; art: ReactNode }[] = [
    {
        name: "Orbit",
        caret: true,
        className: "w-[50px] gap-2",
        art: (
            <>
                <path d="M11 23V5H9L12 0L15 5H13V23Z" stroke="#44464a" strokeWidth="1.300" fill="#fff" />
                <path d="M7 17C14 19 23 17 23 13C23 10 17 8 12 8C6 8 1 10 1 13" stroke="#44464a" strokeWidth="1.800" />
                <path d="M9 12V22L2 17Z" fill="#222" />
            </>
        ),
    },
    {
        name: "Look at",
        className: "w-[39px]",
        art: (
            <>
                <path d="M3 7L8 2L9 4L14 1V4L19 3V8" fill="#dcdde0" stroke="#55585e" strokeWidth="1.300" />
                <rect x="1" y="8" width="22" height="15" fill="#f4f4f5" stroke="#55585e" strokeWidth="1.700" />
                <rect x="5" y="13" width="14" height="6" fill="#a9aeb8" stroke="#44464a" strokeWidth="1.500" />
            </>
        ),
    },
    {
        name: "Pan",
        className: "w-[38px]",
        art: <path d="M8 23C7 18 2 15 1 11Q2 9 4 11L7 14L5 4Q6 2 8 4L10 10V2Q12 0 13 2L14 10L16 3Q18 2 18 4L18 12L21 8Q23 8 23 10C20 15 20 19 18 23Z" fill="#fbfbfb" stroke="#44464a" strokeWidth="1.400" />,
    },
    {
        name: "Zoom",
        className: "w-[39px]",
        art: (
            <>
                <path d="M12 15L19 22" stroke="#3d3d3d" strokeWidth="3.500" />
                <circle cx="8" cy="10" r="7" fill="#e3eff1" stroke="#55606a" strokeWidth="1.700" />
                <path d="M20 0V7M16.500 3.500H24M16.500 10H24" stroke="#333" strokeWidth="1.500" />
            </>
        ),
    },
    {
        name: "Fit",
        caret: true,
        className: "w-[62px] gap-2",
        art: (
            <>
                <path d="M1 1H23V23H1Z" stroke="#666" strokeWidth="1.200" strokeDasharray="3 3" />
                <path d="M16 16L23 23" stroke="#3d3d3d" strokeWidth="4" />
                <circle cx="11" cy="10" r="9" fill="#e3eff1" stroke="#55606a" strokeWidth="1.700" />
            </>
        ),
    },
    {
        name: "Display settings",
        caret: true,
        className: "w-[47px] gap-[3px]",
        art: (
            <>
                <path d="M8 18H16V21L18 23H6L8 21Z" fill="#ddd" stroke="#55585e" strokeWidth="1.300" />
                <rect x="1" y="1" width="22" height="17" fill="#e4e5e8" stroke="#55585e" strokeWidth="1.600" />
                <rect x="4" y="4" width="16" height="11" fill="#8fb2dd" stroke="#42618f" strokeWidth="1.300" />
            </>
        ),
    },
    {
        name: "Grid and snaps",
        caret: true,
        className: "w-[47px] gap-[3px]",
        art: (
            <>
                <rect x="1" y="1" width="22" height="22" fill="url(#g-steel)" stroke="#55585e" strokeWidth="1.500" />
                <path d="M5 1V23M9 1V23M14 1V23M19 1V23M1 5H23M1 9.500H23M1 14H23M1 18.500H23" stroke="#66696f" strokeWidth="1.300" />
            </>
        ),
    },
    {
        name: "Viewports",
        caret: true,
        className: "w-[46px] gap-[3px]",
        art: (
            <>
                <path d="M1 2H11V11H1ZM13 2H23V11H13ZM1 12H11V21H1ZM13 12H23V21H13Z" fill="#8fadd4" stroke="#34496b" strokeWidth="1.600" />
                <path d="M4 5H8V8H4ZM16 5H20V8H16ZM4 15H8V18H4ZM16 15H20V18H16Z" stroke="#c7d7ec" />
            </>
        ),
    },
]

function NavigationBar() {
    return (
        <div className="flex h-9 w-[380px] shrink-0 items-center self-center bg-[#f1f1f1] pl-1">
            {navIcons.map((icon) => (
                <button type="button" key={icon.name} aria-label={icon.name} className={`flex items-center ${icon.className}`}>
                    <SmallIcon>{icon.art}</SmallIcon>
                    {icon.caret && <Caret className="w-2 text-[#3a3a3a]" />}
                </button>
            ))}
        </div>
    )
}

const playback = [
    { name: "Go to start", d: "M0 0H3V22H0ZM19 0V22L4 11Z" },
    { name: "Step back", d: "M14 1V21L0 11ZM16 6H19V16H16Z" },
    { name: "Play", d: "M1 0L19 11L1 22Z" },
    { name: "Step forward", d: "M5 1V21L19 11ZM0 6H3V16H0Z" },
    { name: "Go to end", d: "M16 0H19V22H16ZM0 0V22L15 11Z" },
]

function Timeline() {
    return (
        <footer className="h-[75px] shrink-0 border-t-[3px] border-[#cbcbcb] bg-[#f1f1f1]">
            <div className="ml-[6px] h-[9px] w-[141px] rounded-b-[5px] bg-[#cbcbcb]" />
            <div className="flex items-start pl-4">
                <div className="mt-[22px] flex w-[195px] gap-[18px]">
                    {playback.map((item) => (
                        <button type="button" key={item.name} aria-label={item.name}>
                            <svg viewBox="0 0 19 22" className="h-[22px] w-[19px]" fill={GREY}><path d={item.d} /></svg>
                        </button>
                    ))}
                </div>
                <ol className="mt-[13px] ml-[2px] flex">
                    {timeline.map((name, i) => (
                        <li key={i} className="flex w-9 flex-col items-center">
                            <button type="button" aria-label={name} className="h-[25px]">{timelineIcons[name]}</button>
                            <span className="mt-1 h-2 w-[3px] bg-[#cbcbcb]" />
                            <span className={`h-[3px] bg-[#cbcbcb] ${i === 0 ? "w-[19px] self-end" : i === timeline.length - 1 ? "w-7 self-start" : "w-full"}`} />
                        </li>
                    ))}
                </ol>
                <button type="button" aria-label="Timeline settings" className="mt-5 mr-5 ml-auto">
                    <Gear />
                </button>
            </div>
        </footer>
    )
}

export default function App() {
    return (
        <div className="relative flex h-screen flex-col overflow-hidden bg-[#001a38] font-['Liberation_Sans',Arial,sans-serif]">
            <SharedDefs />
            {/* labels of desktop shortcuts that lie behind the window */}
            <div className="absolute inset-y-0 left-0 w-[11px] overflow-hidden bg-[#001229] text-[16px] text-white">
                <span className="absolute top-[672px] left-1">S</span>
                <span className="absolute top-[815px] left-2">w</span>
            </div>
            <div className="z-10 mr-3 ml-[11px] flex min-h-0 flex-1 flex-col border border-[#1c7fd4] bg-white">
                <TitleBar />
                <TabBar />
                <main className="relative flex min-h-0 flex-1 flex-col pt-[6px] pl-[6px]">
                    <Toolbar />
                    <ViewCube />
                    <div className="mt-[7px] grid min-h-0 flex-1 grid-cols-[450px_1fr_455px]">
                        <aside className="flex min-h-0 flex-col pb-[6px]">
                            <PanelBar title="BROWSER" open />
                            <BrowserTree />
                            <div className="mt-auto">
                                <PanelBar title="COMMENTS" open={false} />
                            </div>
                        </aside>
                        <section className="flex min-h-0 min-w-0 flex-col pb-[6px]">
                            <Model />
                            <NavigationBar />
                        </section>
                    </div>
                </main>
                <Timeline />
            </div>
            <div className="h-[10px] shrink-0" />
            <div className="z-10 flex h-[2px] shrink-0 bg-black">
                <span className="ml-[72px] w-[516px] bg-[#3a3a3a]" />
                <span className="ml-[302px] w-[73px] bg-[#3a3a3a]" />
            </div>
        </div>
    )
}
